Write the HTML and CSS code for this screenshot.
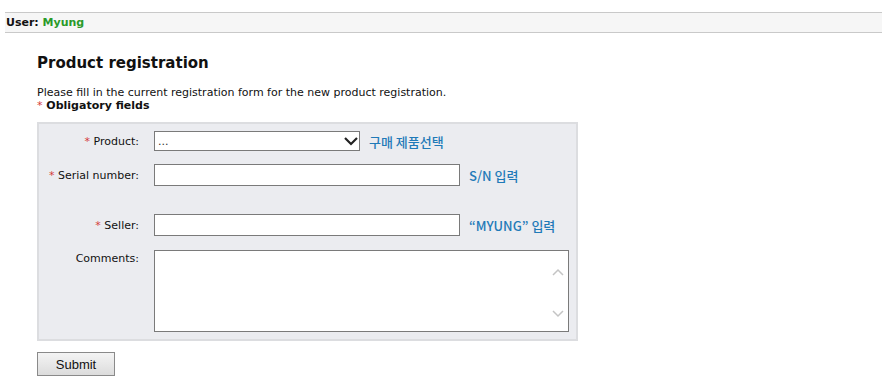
FILE: index.html
```html
<!DOCTYPE html>
<html lang="en">
  <head>
    <meta charset="UTF-8" />
    <title>Product registration</title>
    <link rel="stylesheet" href="styles.css">
  </head>
  <body>
    <div class="user-bar">User: <span class="user-name">Myung</span></div>
    <div class="page">
      <h1 class="title">Product registration</h1>
      <p class="intro">Please fill in the current registration form for the new product registration.</p>
      <p class="legend"><span class="req">*</span> Obligatory fields</p>

      <form class="form-box">
        <div class="row row-product">
          <label class="label"><span class="req">*</span> Product:</label>
          <div class="field">
            <div class="select-wrap">
              <select class="select"><option>...</option></select>
              <svg class="select-arrow" width="16" height="10" viewBox="0 0 16 10">
                <path d="M2 2 L8 8 L14 2" fill="none" stroke="#222" stroke-width="2.2" />
              </svg>
            </div>
            <span class="hint">구매 제품선택</span>
          </div>
        </div>
        <div class="row row-serial">
          <label class="label"><span class="req">*</span> Serial number:</label>
          <div class="field">
            <input class="input" type="text" />
            <span class="hint">S/N 입력</span>
          </div>
        </div>
        <div class="row row-seller">
          <label class="label"><span class="req">*</span> Seller:</label>
          <div class="field">
            <input class="input" type="text" />
            <span class="hint">“MYUNG” 입력</span>
          </div>
        </div>
        <div class="row row-comments">
          <label class="label label-top">Comments:</label>
          <div class="field">
            <div class="area-wrap">
              <textarea class="area"></textarea>
              <svg class="area-arrows" width="16" height="52" viewBox="0 0 16 52">
                <path d="M3 8 L8 3 L13 8" fill="none" stroke="#c4c4c4" stroke-width="1.5" />
                <path d="M3 44 L8 49 L13 44" fill="none" stroke="#c4c4c4" stroke-width="1.5" />
              </svg>
            </div>
          </div>
        </div>
      </form>

      <button class="submit" type="button">Submit</button>
    </div>
  </body>
</html>
```

FILE: styles.css
```css
* {
  margin: 0;
  padding: 0;
  box-sizing: border-box;
}
body {
  font-family: "DejaVu Sans", Verdana, sans-serif;
  font-size: 11px;
  color: #111;
  background: #fff;
  padding: 12px 5px 0 5px;
}

.user-bar {
  background: #f6f6f6;
  border-top: 1px solid #c9c9c9;
  border-bottom: 1px solid #c9c9c9;
  height: 21px;
  line-height: 19px;
  padding-left: 1px;
  font-weight: bold;
}
.user-name {
  color: #2a9a2a;
}

.page {
  padding: 20px 0 0 32px;
}
.title {
  font-size: 15px;
  font-weight: bold;
  line-height: 20px;
  margin-bottom: 13px;
}
.intro {
  line-height: 13px;
}
.legend {
  font-weight: bold;
  line-height: 14px;
  margin-bottom: 9px;
}
.req {
  color: #d43a3a;
  font-weight: normal;
}

.form-box {
  width: 541px;
  background: #ebecf0;
  border: 2px solid #dcdde0;
  padding: 7px 0 7px 0;
  display: flex;
  flex-direction: column;
}
.row {
  display: flex;
  align-items: center;
}
.row-serial {
  margin-top: 13px;
}
.row-seller {
  margin-top: 28px;
}
.row-comments {
  margin-top: 14px;
  align-items: flex-start;
}
.label {
  width: 115px;
  padding-right: 15px;
  text-align: right;
}
.label-top {
  padding-top: 2px;
}
.field {
  display: flex;
  align-items: center;
}

.select-wrap {
  position: relative;
}
.select {
  appearance: none;
  width: 206px;
  height: 20px;
  border: 1px solid #7a7a7a;
  background: #fff;
  font-family: inherit;
  font-size: 11px;
  padding-left: 3px;
  color: #333;
}
.select-arrow {
  position: absolute;
  right: 1px;
  top: 5px;
}
.input {
  width: 306px;
  height: 22px;
  border: 1px solid #7a7a7a;
  background: #fff;
}
.hint {
  font-family: "Noto Sans CJK KR", "Noto Sans", sans-serif;
  font-size: 13px;
  font-weight: 500;
  color: #1f7ab8;
  margin-left: 9px;
}

.area-wrap {
  position: relative;
}
.area {
  display: block;
  width: 415px;
  height: 82px;
  border: 1px solid #7a7a7a;
  background: #fff;
  resize: none;
}
.area-arrows {
  position: absolute;
  right: 3px;
  top: 17px;
}

.submit {
  margin-top: 11px;
  width: 78px;
  height: 24px;
  font-family: "Liberation Sans", Arial, sans-serif;
  font-size: 13px;
  color: #111;
  background: linear-gradient(#f4f4f4, #dcdcdc);
  border: 1px solid #8a8a8a;
}
```
